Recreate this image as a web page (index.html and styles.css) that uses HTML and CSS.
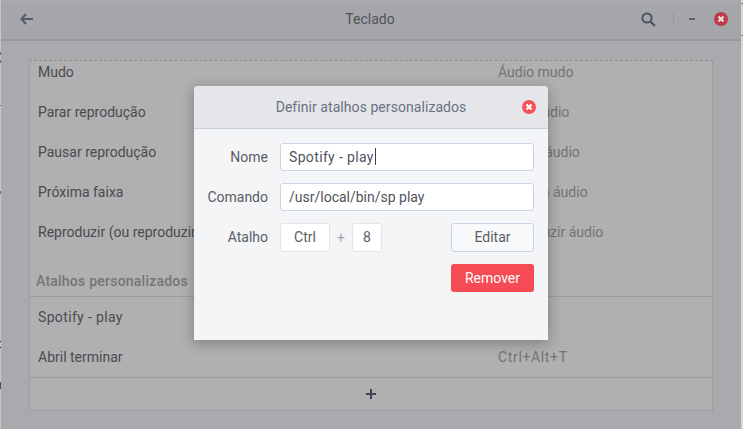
FILE: index.html
```html
<!DOCTYPE html>
<html lang="pt">
<head>
<meta charset="utf-8">
<title>Teclado</title>
<link rel="stylesheet" href="styles.css">
</head>
<body>
<div class="window">
  <header class="titlebar">
    <button class="tb-back" aria-label="Voltar">
      <svg width="13" height="12" viewBox="0 0 13 12"><path d="M6 1 1.500 6l4.500 5M2 6h11" fill="none" stroke="#565b69" stroke-width="2"/></svg>
    </button>
    <div class="tb-title">Teclado</div>
    <div class="tb-actions">
      <svg class="tb-search" width="15" height="15" viewBox="0 0 15 15"><circle cx="6" cy="6" r="4.600" fill="none" stroke="#4d5260" stroke-width="2"/><path d="M9.500 9.500 14 14" stroke="#4d5260" stroke-width="2.200"/></svg>
      <span class="tb-sep"></span>
      <span class="tb-min"></span>
      <svg class="x-icon" width="14" height="14" viewBox="0 0 14 14"><circle cx="7" cy="7" r="7" fill="#c03a45"/><path d="M4.500 4.500l5 5M9.500 4.500l-5 5" stroke="#e4e4e6" stroke-width="2.200"/></svg>
    </div>
  </header>
  <main class="content">
    <section class="panel">
      <div class="row row-first"><span class="row-name">Mudo</span><span class="row-val">Áudio mudo</span></div>
      <div class="row"><span class="row-name">Parar reprodução</span><span class="row-val">Parar áudio</span></div>
      <div class="row"><span class="row-name">Pausar reprodução</span><span class="row-val">Pausar áudio</span></div>
      <div class="row"><span class="row-name">Próxima faixa</span><span class="row-val">Próxima áudio</span></div>
      <div class="row"><span class="row-name">Reproduzir (ou reproduzir/pausar)</span><span class="row-val">Reproduzir áudio</span></div>
      <h2 class="section-head">Atalhos personalizados</h2>
      <div class="custom">
        <div class="row"><span class="row-name spaced">Spotify - play</span><span class="row-val"></span></div>
        <div class="row"><span class="row-name">Abril terminar</span><span class="row-val shortcut">Ctrl+Alt+T</span></div>
      </div>
      <div class="add-row">
        <svg width="10" height="10" viewBox="0 0 10 10"><path d="M5 0v10M0 5h10" stroke="#3f4350" stroke-width="2"/></svg>
      </div>
    </section>
  </main>
  <div class="modal">
    <div class="modal-head">
      <span class="modal-title">Definir atalhos personalizados</span>
      <svg class="modal-close" width="14" height="14" viewBox="0 0 14 14"><circle cx="7" cy="7" r="7" fill="#f5525c"/><path d="M4.500 4.500l5 5M9.500 4.500l-5 5" stroke="#fff" stroke-width="2.200"/></svg>
    </div>
    <div class="modal-body">
      <label class="f-label">Nome</label>
      <div class="input spaced">Spotify - play<span class="caret"></span></div>
      <label class="f-label">Comando</label>
      <div class="input">/usr/local/bin/sp play</div>
      <label class="f-label f-label-key">Atalho</label>
      <div class="keys">
        <span class="key key-ctrl">Ctrl</span>
        <span class="plus">+</span>
        <span class="key key-8">8</span>
        <button class="btn-edit">Editar</button>
      </div>
      <button class="btn-remove">Remover</button>
    </div>
  </div>
  <div class="edge edge-left"></div>
  <div class="edge edge-right"></div>
</div>
</body>
</html>
```
FILE: styles.css
```css
* { box-sizing: border-box; }
html, body { margin: 0; padding: 0; }
body {
  width: 743px;
  height: 429px;
  overflow: hidden;
  font-family: Roboto, "Noto Sans", sans-serif;
  font-size: 14px;
  background: #a9aaad;
}
.window {
  position: relative;
  width: 743px;
  height: 429px;
  overflow: hidden;
  background: #a9aaad;
}
.edge { position: absolute; top: 0; bottom: 0; }
.edge-left {
  left: 0;
  width: 1px;
  background:
    linear-gradient(#e0323c, #e0323c) 0 105px / 1px 1px no-repeat,
    linear-gradient(#6d6e72, #6d6e72) 0 52px / 1px 3px no-repeat,
    linear-gradient(#6d6e72, #6d6e72) 0 60px / 1px 3px no-repeat,
    linear-gradient(#6d6e72, #6d6e72) 0 191px / 1px 3px no-repeat,
    linear-gradient(#2c2c2e, #2c2c2e) 0 341px / 1px 1px no-repeat,
    linear-gradient(#2c2c2e, #2c2c2e) 0 347px / 1px 1px no-repeat,
    linear-gradient(#55565a, #55565a) 0 382px / 1px 7px no-repeat,
    #c4c5c7;
}
.edge-right {
  right: 0;
  width: 2px;
  background:
    linear-gradient(#7d7e81, #7d7e81) 0 3px / 2px 1px no-repeat,
    linear-gradient(#7d7e81, #7d7e81) 0 35px / 2px 1px no-repeat,
    #d6d7d8;
}
.titlebar {
  height: 41px;
  display: flex;
  align-items: center;
  padding: 0 15px 4px 20px;
  background: #a5a6a9;
  border-bottom: 2px solid #97989b;
  border-top: 3px solid #a9aaad;
}
.tb-back {
  width: 13px;
  height: 12px;
  padding: 0;
  border: 0;
  background: none;
  display: flex;
}
.tb-title {
  flex: 1;
  text-align: center;
  color: #505359;
  padding-left: 66px;
}
.tb-actions {
  display: flex;
  align-items: center;
}
.tb-sep {
  width: 1px;
  height: 15px;
  margin: 0 15px 0 17px;
  background: #97989b;
}
.tb-min {
  width: 6px;
  height: 2px;
  margin-right: 19px;
  background: #5d616c;
}
.content { padding: 19px 30px 0 29px; }
.panel {
  width: 684px;
  height: 351px;
  display: flex;
  flex-direction: column;
  background: #b0b0b0;
  border: 1px solid #9c9d9f;
  border-top: 1px dashed #8e8f91;
}
.row {
  height: 40px;
  display: flex;
  align-items: center;
  padding: 0 0 0 8px;
  flex: none;
}
.row-first { height: 31px; align-items: flex-end; padding-bottom: 10px; line-height: 20px; }
.row-name { width: 460px; color: #494b52; white-space: nowrap; }
.row-val { color: #727376; white-space: nowrap; }
.shortcut { letter-spacing: .65px; }
.spaced { letter-spacing: .35px; }
.section-head {
  margin: 0;
  height: 44px;
  flex: none;
  display: flex;
  align-items: flex-end;
  padding: 0 0 7px 6px;
  font-size: 14px;
  font-weight: 500;
  letter-spacing: .23px;
  color: #75767a;
}
.custom {
  border-top: 1px solid #9c9d9f;
  border-bottom: 1px solid #9c9d9f;
}
.add-row {
  flex: 1;
  display: flex;
  align-items: center;
  justify-content: center;
}
.modal {
  position: absolute;
  left: 194px;
  top: 86px;
  width: 354px;
  height: 254px;
  background: #f4f5f7;
  border-radius: 4px 4px 0 0;
  box-shadow: 0 3px 14px rgba(0, 0, 0, .3);
}
.modal-head {
  height: 43px;
  display: flex;
  align-items: center;
  justify-content: center;
  position: relative;
  background: rgba(227, 229, 233, .97);
  border-bottom: 1px solid #ccd1dc;
  border-radius: 4px 4px 0 0;
}
.modal-title { color: #6a7182; letter-spacing: .06px; }
.modal-close { position: absolute; right: 12px; top: 14px; }
.modal-body {
  display: grid;
  grid-template-columns: 60px 1fr;
  grid-template-rows: 28px 28px 29px 28px;
  gap: 12px;
  padding: 14px 14px 0;
}
.f-label {
  display: flex;
  align-items: center;
  justify-content: flex-end;
  color: #5a5e64;
  white-space: nowrap;
}
.f-label-key { padding-bottom: 2px; }
.input {
  display: flex;
  align-items: center;
  padding: 0 8px 1px;
  background: #fff;
  border: 1px solid #ccd6e8;
  border-radius: 3px;
  color: #50545d;
}
.caret {
  width: 1px;
  height: 17px;
  margin-left: 1px;
  background: #3d404a;
}
.keys { display: flex; align-items: stretch; }
.key {
  display: flex;
  align-items: center;
  justify-content: center;
  padding-bottom: 1px;
  background: #fff;
  border: 1px solid #e2e4e9;
  border-radius: 3px;
  color: #5a5e64;
}
.key-ctrl { width: 50px; }
.key-8 { width: 30px; }
.plus {
  width: 22px;
  display: flex;
  align-items: center;
  justify-content: center;
  color: #a4a7ae;
}
.btn-edit {
  margin-left: auto;
  width: 83px;
  padding: 0 0 1px;
  font: inherit;
  color: #5a5e64;
  background: #f8f9fb;
  border: 1px solid #ccd3e3;
  border-radius: 3px;
}
.btn-remove {
  grid-column: 2;
  justify-self: end;
  width: 83px;
  padding: 0 0 1px;
  font: inherit;
  color: #fff;
  background: #f54b55;
  border: 0;
  border-radius: 3px;
}
```
